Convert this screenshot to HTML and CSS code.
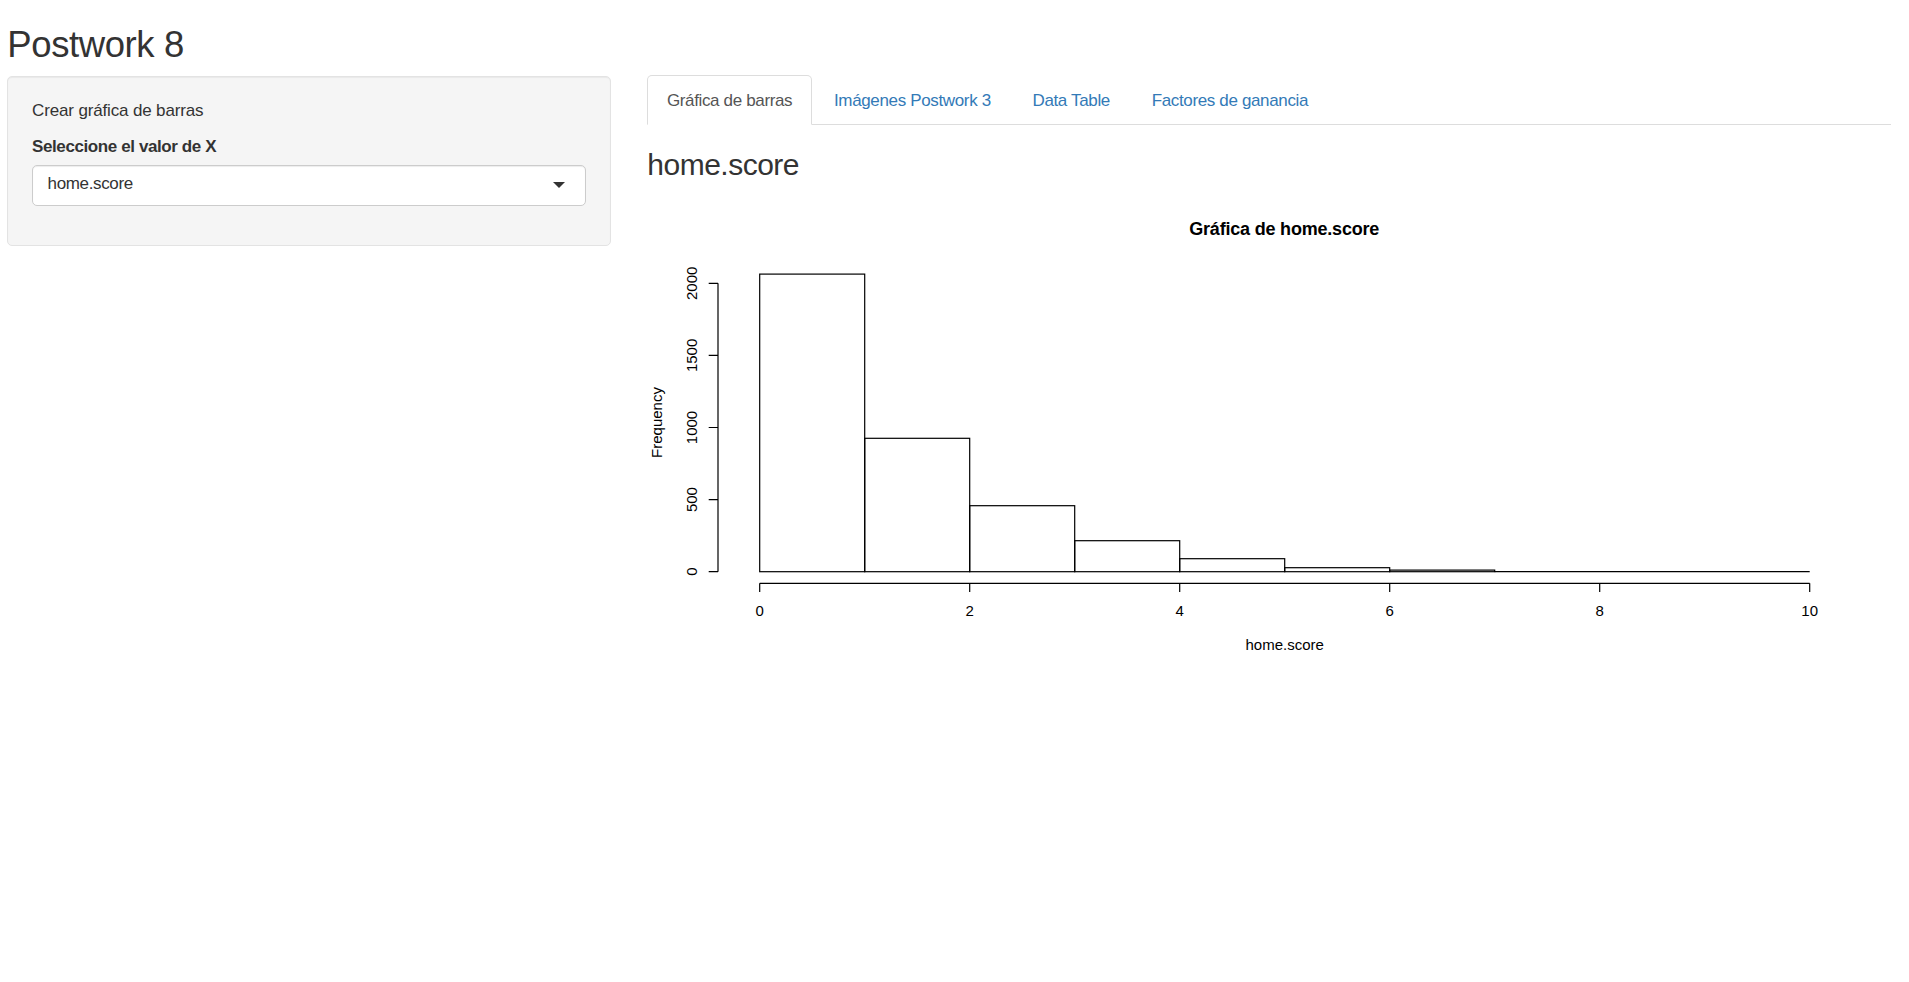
FILE: index.html
```html
<!DOCTYPE html>
<html lang="es">
<head>
<meta charset="utf-8">
<title>Postwork 8</title>
<link rel="stylesheet" href="styles.css">
</head>
<body>
<div class="page">
  <h2 class="title">Postwork 8</h2>
  <div class="row">
    <aside class="well">
      <p class="intro">Crear gráfica de barras</p>
      <div class="form-group">
        <label class="label">Seleccione el valor de X</label>
        <div class="select">
          <span class="select-value">home.score</span>
          <span class="caret"></span>
        </div>
      </div>
    </aside>
    <main class="main">
      <ul class="tabs">
        <li class="tab active"><a>Gráfica de barras</a></li>
        <li class="tab"><a>Imágenes Postwork 3</a></li>
        <li class="tab"><a>Data Table</a></li>
        <li class="tab"><a>Factores de ganancia</a></li>
      </ul>
      <h3 class="subtitle">home.score</h3>
      <svg class="plot" width="1243.5" height="500" viewBox="647.3 194 1243.5 500" xmlns="http://www.w3.org/2000/svg">
        <g class="plot-text">
          <text x="1284.5" y="235" text-anchor="middle" class="plot-main">Gráfica de home.score</text>
          <text x="1285" y="650" text-anchor="middle">home.score</text>
          <text transform="translate(662.5 422.5) rotate(-90)" text-anchor="middle">Frequency</text>
          <text transform="translate(697.3 571.7) rotate(-90)" text-anchor="middle">0</text>
          <text transform="translate(697.3 499.6) rotate(-90)" text-anchor="middle">500</text>
          <text transform="translate(697.3 427.5) rotate(-90)" text-anchor="middle">1000</text>
          <text transform="translate(697.3 355.4) rotate(-90)" text-anchor="middle">1500</text>
          <text transform="translate(697.3 283.3) rotate(-90)" text-anchor="middle">2000</text>
          <text x="760" y="615.7" text-anchor="middle">0</text>
          <text x="970" y="615.7" text-anchor="middle">2</text>
          <text x="1180" y="615.7" text-anchor="middle">4</text>
          <text x="1390" y="615.7" text-anchor="middle">6</text>
          <text x="1600" y="615.7" text-anchor="middle">8</text>
          <text x="1810" y="615.7" text-anchor="middle">10</text>
        </g>
        <g class="plot-lines" fill="none">
          <path d="M718.3 283.3 V571.7 M709 571.7 H718.3 M709 499.6 H718.3 M709 427.5 H718.3 M709 355.4 H718.3 M709 283.3 H718.3"/>
          <path d="M760 583.3 H1810 M760 583.3 V592 M970 583.3 V592 M1180 583.3 V592 M1390 583.3 V592 M1600 583.3 V592 M1810 583.3 V592"/>
          <rect x="760" y="274.1" width="105" height="297.6"/>
          <rect x="865" y="438.3" width="105" height="133.4"/>
          <rect x="970" y="505.7" width="105" height="66"/>
          <rect x="1075" y="540.7" width="105" height="31"/>
          <rect x="1180" y="558.7" width="105" height="13"/>
          <rect x="1285" y="567.7" width="105" height="4"/>
          <rect x="1390" y="570.1" width="105" height="1.6"/>
          <path d="M1495 571.7 H1810"/>
        </g>
      </svg>
    </main>
  </div>
</div>
</body>
</html>
```
FILE: styles.css
```css
html, body {
  margin: 0;
  padding: 0;
  background: #fff;
}

body {
  font-family: "Liberation Sans", Arial, Helvetica, sans-serif;
  font-size: 17px;
  line-height: 25px;
  color: #333;
}

.page {
  padding: 0 18.2px 0 7.3px;
}

.title {
  margin: 23.5px 0 10.25px;
  font-size: 36.5px;
  font-weight: 500;
  line-height: 41.25px;
  letter-spacing: -0.4px;
  color: #333;
}

.row {
  display: flex;
  align-items: flex-start;
  gap: 36.6px;
}

.well {
  box-sizing: border-box;
  width: 603.4px;
  flex: none;
  margin-top: 0.7px;
  padding: 21.3px 23.75px 22px;
  background: #f5f5f5;
  border: 1px solid #e3e3e3;
  border-radius: 5px;
  box-shadow: inset 0 1px 1px rgba(0, 0, 0, 0.05);
}

.intro {
  margin: 0 0 11px;
  letter-spacing: -0.15px;
}

.form-group {
  margin-bottom: 17.5px;
}

.label {
  display: block;
  font-weight: bold;
  letter-spacing: -0.4px;
  margin-bottom: 6.25px;
}

.select {
  box-sizing: border-box;
  height: 40.3px;
  display: flex;
  align-items: center;
  padding: 0 19.5px 3px 14.5px;
  background: #fff;
  border: 1px solid #ccc;
  border-radius: 5px;
  box-shadow: inset 0 1px 1px rgba(0, 0, 0, 0.075);
  color: #333;
}

.select-value {
  flex: 1;
  letter-spacing: -0.35px;
}

.caret {
  width: 0;
  height: 0;
  margin-top: 2px;
  border-top: 6.25px solid #333;
  border-left: 6.25px solid transparent;
  border-right: 6.25px solid transparent;
}

.main {
  flex: 1;
  min-width: 0;
}

.tabs {
  display: flex;
  margin: 0;
  padding: 0;
  list-style: none;
  border-bottom: 1px solid #ddd;
}

.tab {
  margin-bottom: -1px;
  margin-right: 2.5px;
}

.tab a {
  display: block;
  padding: 11.5px 18.6px;
  line-height: 25px;
  letter-spacing: -0.35px;
  border: 1px solid transparent;
  border-radius: 5px 5px 0 0;
  color: #337ab7;
  text-decoration: none;
  cursor: pointer;
}

.tab.active a {
  color: #555;
  background: #fff;
  border-color: #ddd #ddd transparent;
}

.subtitle {
  margin: 23px 0 13px;
  font-size: 30px;
  font-weight: 500;
  line-height: 33px;
  letter-spacing: -0.5px;
  color: #333;
}

.plot {
  display: block;
}

.plot-text {
  font-family: "Liberation Sans", Arial, Helvetica, sans-serif;
  font-size: 15px;
  fill: #000;
}

.plot-main {
  font-size: 18px;
  font-weight: bold;
  letter-spacing: -0.2px;
}

.plot-lines {
  stroke: #000;
  stroke-width: 1.2;
}
```
